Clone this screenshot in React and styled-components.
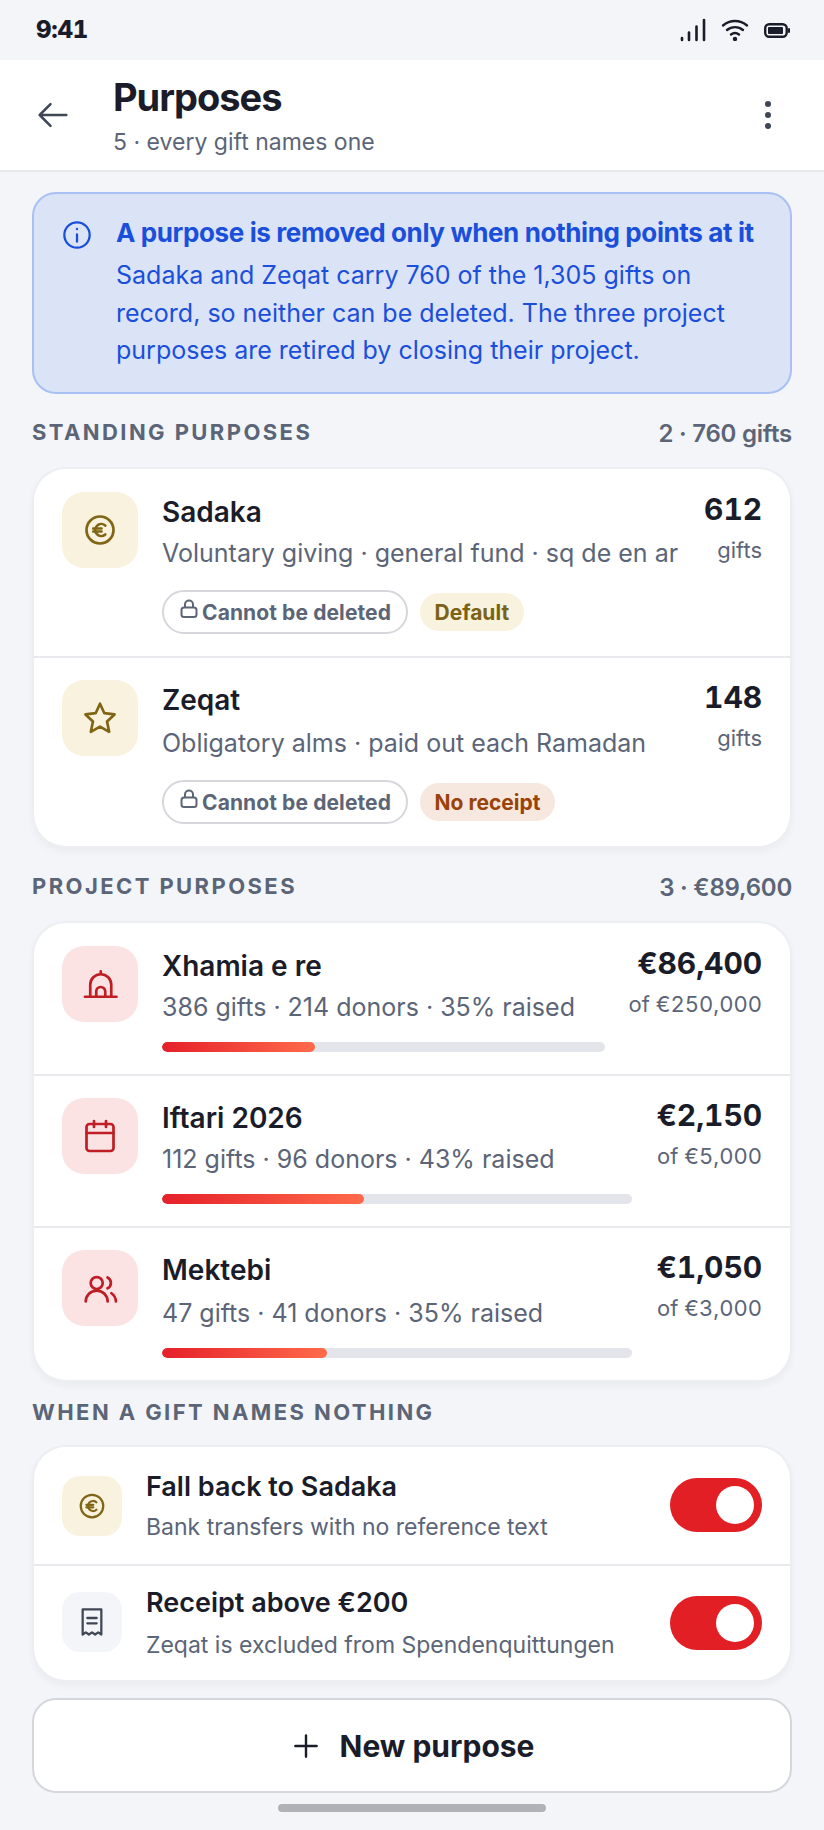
import React from 'react';
import styled, { createGlobalStyle } from 'styled-components';

const Global = createGlobalStyle`
  html, body { margin: 0; padding: 0; background: #f3f5f9; }
  * { box-sizing: border-box; }
  body { font-family: Inter, "Noto Sans", sans-serif; color: #1a1d29; }
`;

const Page = styled.div`
  width: 824px;
  height: 1830px;
  background: #f3f5f9;
  display: flex;
  flex-direction: column;
`;
const StatusBar = styled.div`
  height: 60px;
  padding: 0 34px 0 36px;
  display: flex;
  align-items: center;
  justify-content: space-between;
`;
const Clock = styled.span`
  font-size: 24px;
  font-weight: 800;
  line-height: 1;
  font-variant-numeric: tabular-nums;
  letter-spacing: -0.24px;
`;
const StatusIcons = styled.div`
  display: flex;
  align-items: center;
  gap: 15px;
  color: #1a1d29;
`;
const Header = styled.header`
  height: 112px;
  background: #fff;
  border-bottom: 2px solid #e7e8ec;
  padding: 0 53px 0 33px;
  display: flex;
  align-items: center;
`;
const BackBtn = styled.div`
  width: 80px;
  display: flex;
  color: #3f4654;
`;
const HeaderText = styled.div`
  flex: 1;
  display: flex;
  flex-direction: column;
  margin-top: -1px;
`;
const HeaderTitle = styled.h1`
  margin: 0;
  font-size: 38px;
  font-weight: 700;
  letter-spacing: -1px;
  line-height: 48px;
`;
const HeaderSub = styled.div`
  font-size: 23px;
  line-height: 30px;
  margin-top: 6px;
  color: #5b6577;
`;
const DotsBtn = styled.div`
  display: flex;
  flex-direction: column;
  gap: 5px;
`;
const Dot = styled.span`
  width: 6px;
  height: 6px;
  border-radius: 50%;
  background: #3f4654;
`;
const Content = styled.main`
  padding: 20px 32px 0;
  display: flex;
  flex-direction: column;
`;
const Banner = styled.section`
  height: 202px;
  border: 2px solid #a9c0f2;
  border-radius: 24px;
  background: #dbe3f7;
  color: #1a4fdc;
  padding: 22px 20px 0 28px;
  display: flex;
  gap: 23px;
`;
const BannerIcon = styled.div`
  flex: none;
  width: 32px;
  padding-top: 3px;
  margin-left: -1px;
`;
const BannerTitle = styled.div`
  font-size: 26px;
  font-weight: 700;
  line-height: 34px;
  letter-spacing: -0.38px;
  white-space: nowrap;
`;
const BannerBody = styled.div`
  font-size: 25px;
  line-height: 37.5px;
  margin-top: 7px;
  white-space: nowrap;
`;
const SectionHead = styled.div`
  display: flex;
  justify-content: space-between;
  align-items: center;
  height: 32px;
  margin-top: ${(p) => p.$top}px;
  margin-bottom: ${(p) => p.$bottom}px;
`;
const SectionTitle = styled.h2`
  margin: 0;
  font-size: 22px;
  font-weight: 700;
  letter-spacing: 2.42px;
  color: #5b6577;
  text-transform: uppercase;
`;
const SectionMeta = styled.span`
  font-size: 24px;
  font-weight: 600;
  letter-spacing: -0.24px;
  color: #5b6577;
  margin-top: 2px;
`;
const Card = styled.section`
  margin: 0 2px;
  background: #fff;
  border-radius: 32px;
  box-shadow: 0 0 0 2px #eceef2, 0 4px 10px rgba(26, 29, 41, 0.06);
  overflow: hidden;
`;
const Row = styled.div`
  display: flex;
  gap: 24px;
  padding: ${(p) => p.$pad}px 28px 0;
  height: ${(p) => p.$h}px;
  & + & { border-top: 2px solid #e9eaed; }
`;
const Tile = styled.div`
  flex: none;
  width: ${(p) => p.$size}px;
  height: ${(p) => p.$size}px;
  border-radius: ${(p) => (p.$size > 70 ? 22 : 18)}px;
  background: ${(p) => ({ gold: '#f9f2df', red: '#fbe3e4', grey: '#f3f5f9' })[p.$tone]};
  color: ${(p) => ({ gold: '#7f6514', red: '#be1e24', grey: '#3f4654' })[p.$tone]};
  display: flex;
  align-items: center;
  justify-content: center;
`;
const Main = styled.div`
  flex: 1;
  min-width: 0;
  display: flex;
  flex-direction: column;
`;
const Name = styled.div`
  font-size: 28px;
  font-weight: 600;
  line-height: 36px;
  margin-top: 2px;
`;
const Sub = styled.div`
  font-size: 25px;
  line-height: 34px;
  margin-top: ${(p) => p.$top ?? 6}px;
  color: #5b6577;
  white-space: nowrap;
`;
const Chips = styled.div`
  display: flex;
  align-items: center;
  gap: 12px;
  margin-top: 20px;
`;
const LockChip = styled.span`
  display: inline-flex;
  align-items: center;
  height: 44px;
  padding: 0 15px 0 16px;
  border: 2px solid #d5d7dc;
  border-radius: 22px;
  gap: 4px;
  font-size: 21px;
  font-weight: 700;
  letter-spacing: 0.1px;
  color: #5b6577;
`;
const LockGlyph = styled.svg`
  margin-top: -7px;
  flex: none;
`;
const Tag = styled.span`
  display: inline-flex;
  align-items: center;
  height: 38px;
  padding: 0 14.5px;
  border-radius: 19px;
  font-size: 21px;
  font-weight: 700;
  background: ${(p) => (p.$tone === 'amber' ? '#f6e8de' : '#f9f2df')};
  color: ${(p) => (p.$tone === 'amber' ? '#9a4208' : '#7a6314')};
`;
const Side = styled.div`
  flex: none;
  display: flex;
  flex-direction: column;
  align-items: flex-end;
`;
const Value = styled.div`
  font-size: 30px;
  font-weight: 700;
  line-height: 40px;
  margin-top: -3px;
  letter-spacing: -0.1px;
  font-variant-numeric: tabular-nums;
`;
const ValueSub = styled.div`
  font-size: 22px;
  line-height: 30px;
  margin-top: 6px;
  color: #5b6577;
  font-variant-numeric: tabular-nums;
`;
const Track = styled.div`
  height: 10px;
  border-radius: 5px;
  background: #e3e5ea;
  margin-top: 18px;
  overflow: hidden;
`;
const Fill = styled.div`
  height: 100%;
  border-radius: 5px;
  background: linear-gradient(90deg, #e5202a, #ff6b4a);
`;
const ToggleMain = styled(Main)`
  margin-top: -6px;
`;
const ToggleTitle = styled.div`
  font-size: 27px;
  font-weight: 600;
  line-height: 34px;
`;
const ToggleSub = styled.div`
  font-size: 23px;
  line-height: 30px;
  margin-top: ${(p) => p.$top ?? 8}px;
  color: #5b6577;
  white-space: nowrap;
`;
const Switch = styled.div`
  flex: none;
  width: 92px;
  height: 54px;
  margin-top: ${(p) => p.$top}px;
  border-radius: 27px;
  background: #e31f26;
  display: flex;
  align-items: center;
  justify-content: flex-end;
  padding-right: 8px;
`;
const Thumb = styled.span`
  width: 38px;
  height: 38px;
  border-radius: 50%;
  background: #fff;
`;
const NewButton = styled.button`
  height: 95px;
  margin-top: 18px;
  width: 100%;
  background: #fff;
  border: 2px solid #d5d7dc;
  border-radius: 24px;
  display: flex;
  align-items: center;
  justify-content: center;
  gap: 18px;
  font-family: inherit;
  font-size: 30px;
  font-weight: 700;
  color: #1a1d29;
`;
const HomeBar = styled.div`
  width: 268px;
  height: 8px;
  border-radius: 4px;
  background: #b0b2b8;
  margin: 11px auto 0;
`;

const Icon = ({ size = 36, sw = 1.8, children }) => (
  <svg width={size} height={size} viewBox="0 0 24 24" fill="none" stroke="currentColor" strokeWidth={sw} strokeLinecap="round" strokeLinejoin="round">
    {children}
  </svg>
);
const EuroIcon = ({ size }) => (
  <Icon size={size} sw={1.8}>
    <circle cx="12" cy="12" r="9" />
    <path d="M15.5 9a4 4 0 1 0 0 6" />
    <path d="M7.5 11h5.5M7.5 13h5.5" />
  </Icon>
);
const StarIcon = () => (
  <Icon>
    <path d="M12 2.500l2.900 6.300 6.800.8-5 4.700 1.400 6.900-6.100-3.500-6.100 3.500 1.400-6.900-5-4.700 6.800-.8z" />
  </Icon>
);
const MosqueIcon = () => (
  <Icon>
    <path d="M2 20.500h21M5.500 20.500V12.500a7 7 0 0 1 14 0v8M9.500 20.500V17a3 3 0 0 1 6 0v3.500M12.500 5.500V3.500" />
  </Icon>
);
const CalendarIcon = () => (
  <Icon>
    <rect x="3" y="4" width="18" height="18" rx="2" />
    <path d="M16 2v4M8 2v4M3 10h18" />
  </Icon>
);
const UsersIcon = () => (
  <Icon>
    <circle cx="9.800" cy="8.700" r="4" />
    <path d="M2.500 21a7.300 7.300 0 0 1 14.600 0M17 5a4 4 0 0 1 0 7.200M19.600 15.500a7 7 0 0 1 3 5.500" />
  </Icon>
);
const ReceiptIcon = () => (
  <Icon size={32} sw={1.7}>
    <path d="M5 2.600h14v18.800l-2.300-1.600-2.400 1.600-2.300-1.600-2.300 1.600-2.300-1.600-2.400 1.600z" />
    <path d="M8.500 9h7M8.500 13h7" />
  </Icon>
);
const Lock = () => (
  <LockGlyph width="18" height="19" viewBox="0 0 18 19" fill="none" stroke="currentColor" strokeWidth="2">
    <rect x="1.500" y="8.500" width="15" height="9.500" rx="2.500" />
    <path d="M5 8.500V5.500a4 4 0 0 1 8 0v3" />
  </LockGlyph>
);
const CannotDelete = () => (
  <LockChip>
    <Lock />
    Cannot be deleted
  </LockChip>
);

const projects = [
  { name: 'Xhamia e re', sub: '386 gifts · 214 donors · 35% raised', value: '€86,400', of: 'of €250,000', pct: 34.5, icon: <MosqueIcon />, h: 151, pad: 23 },
  { name: 'Iftari 2026', sub: '112 gifts · 96 donors · 43% raised', value: '€2,150', of: 'of €5,000', pct: 43, icon: <CalendarIcon />, h: 152, pad: 22 },
  { name: 'Mektebi', sub: '47 gifts · 41 donors · 35% raised', value: '€1,050', of: 'of €3,000', pct: 35, icon: <UsersIcon />, h: 154, pad: 22, subTop: 8 },
];

export default function App() {
  return (
    <Page>
      <Global />
      <StatusBar>
        <Clock>9:41</Clock>
        <StatusIcons>
          <svg width="26" height="24" viewBox="0 0 26 24" fill="none" stroke="currentColor" strokeWidth="2.600" strokeLinecap="round">
            <path d="M2 20v2M9 14.500V22M16.500 8.500V22M24 2v20" />
          </svg>
          <svg width="28" height="22" viewBox="0 0 28 22" fill="none" stroke="currentColor" strokeWidth="2.400" strokeLinecap="round">
            <path d="M2 6.500c7-6 17-6 24 0M6 11c4.500-3.800 11.500-3.800 16 0M10 15.500c2.500-2 5.500-2 8 0" />
            <circle cx="14" cy="20" r="1" fill="currentColor" />
          </svg>
          <svg width="26" height="15" viewBox="0 0 26 15" fill="none">
            <rect x="1.200" y="1.200" width="21.500" height="12.600" rx="4" stroke="currentColor" strokeWidth="2.400" />
            <rect x="4" y="4" width="15" height="7" rx="1" fill="currentColor" />
            <rect x="24" y="5" width="2" height="5" rx="1" fill="currentColor" />
          </svg>
        </StatusIcons>
      </StatusBar>
      <Header>
        <BackBtn>
          <svg width="40" height="40" viewBox="0 0 24 24" fill="none" stroke="currentColor" strokeWidth="1.500" strokeLinecap="round" strokeLinejoin="round">
            <path d="M20 12H4M10.500 5.500L4 12l6.500 6.500" />
          </svg>
        </BackBtn>
        <HeaderText>
          <HeaderTitle>Purposes</HeaderTitle>
          <HeaderSub>5 · every gift names one</HeaderSub>
        </HeaderText>
        <DotsBtn>
          <Dot />
          <Dot />
          <Dot />
        </DotsBtn>
      </Header>
      <Content>
        <Banner>
          <BannerIcon>
            <svg width="32" height="32" viewBox="0 0 24 24" fill="none" stroke="currentColor" strokeWidth="1.700" strokeLinecap="round">
              <circle cx="12" cy="12" r="9.500" />
              <path d="M12 11.500v5.500M12 7.500v.1" />
            </svg>
          </BannerIcon>
          <div>
            <BannerTitle>A purpose is removed only when nothing points at it</BannerTitle>
            <BannerBody>
              Sadaka and Zeqat carry 760 of the 1,305 gifts on
              <br />
              record, so neither can be deleted. The three project
              <br />
              purposes are retired by closing their project.
            </BannerBody>
          </div>
        </Banner>

        <SectionHead $top={22} $bottom={21}>
          <SectionTitle>Standing purposes</SectionTitle>
          <SectionMeta>2 · 760 gifts</SectionMeta>
        </SectionHead>
        <Card>
          <Row $pad={23} $h={187}>
            <Tile $size={76} $tone="gold"><EuroIcon /></Tile>
            <Main>
              <Name>Sadaka</Name>
              <Sub>Voluntary giving · general fund · sq de en ar</Sub>
              <Chips>
                <CannotDelete />
                <Tag>Default</Tag>
              </Chips>
            </Main>
            <Side>
              <Value>612</Value>
              <ValueSub>gifts</ValueSub>
            </Side>
          </Row>
          <Row $pad={22} $h={190}>
            <Tile $size={76} $tone="gold"><StarIcon /></Tile>
            <Main>
              <Name>Zeqat</Name>
              <Sub $top={8}>Obligatory alms · paid out each Ramadan</Sub>
              <Chips>
                <CannotDelete />
                <Tag $tone="amber">No receipt</Tag>
              </Chips>
            </Main>
            <Side>
              <Value>148</Value>
              <ValueSub>gifts</ValueSub>
            </Side>
          </Row>
        </Card>

        <SectionHead $top={24} $bottom={21}>
          <SectionTitle>Project purposes</SectionTitle>
          <SectionMeta>3 · €89,600</SectionMeta>
        </SectionHead>
        <Card>
          {projects.map((p) => (
            <Row key={p.name} $pad={p.pad} $h={p.h}>
              <Tile $size={76} $tone="red">{p.icon}</Tile>
              <Main>
                <Name>{p.name}</Name>
                <Sub $top={p.subTop}>{p.sub}</Sub>
                <Track>
                  <Fill style={{ width: `${p.pct}%` }} />
                </Track>
              </Main>
              <Side>
                <Value>{p.value}</Value>
                <ValueSub>{p.of}</ValueSub>
              </Side>
            </Row>
          ))}
        </Card>

        <SectionHead $top={16} $bottom={19}>
          <SectionTitle>When a gift names nothing</SectionTitle>
        </SectionHead>
        <Card>
          <Row $pad={29} $h={117}>
            <Tile $size={60} $tone="gold"><EuroIcon size={30} /></Tile>
            <ToggleMain>
              <ToggleTitle>Fall back to Sadaka</ToggleTitle>
              <ToggleSub>Bank transfers with no reference text</ToggleSub>
            </ToggleMain>
            <Switch $top={2}><Thumb /></Switch>
          </Row>
          <Row $pad={26} $h={116}>
            <Tile $size={60} $tone="grey"><ReceiptIcon /></Tile>
            <ToggleMain>
              <ToggleTitle>Receipt above €200</ToggleTitle>
              <ToggleSub $top={10}>Zeqat is excluded from Spendenquittungen</ToggleSub>
            </ToggleMain>
            <Switch $top={4}><Thumb /></Switch>
          </Row>
        </Card>

        <NewButton>
          <svg width="32" height="32" viewBox="0 0 24 24" fill="none" stroke="currentColor" strokeWidth="1.800" strokeLinecap="round">
            <path d="M12 4v16M4 12h16" />
          </svg>
          New purpose
        </NewButton>
        <HomeBar />
      </Content>
    </Page>
  );
}
